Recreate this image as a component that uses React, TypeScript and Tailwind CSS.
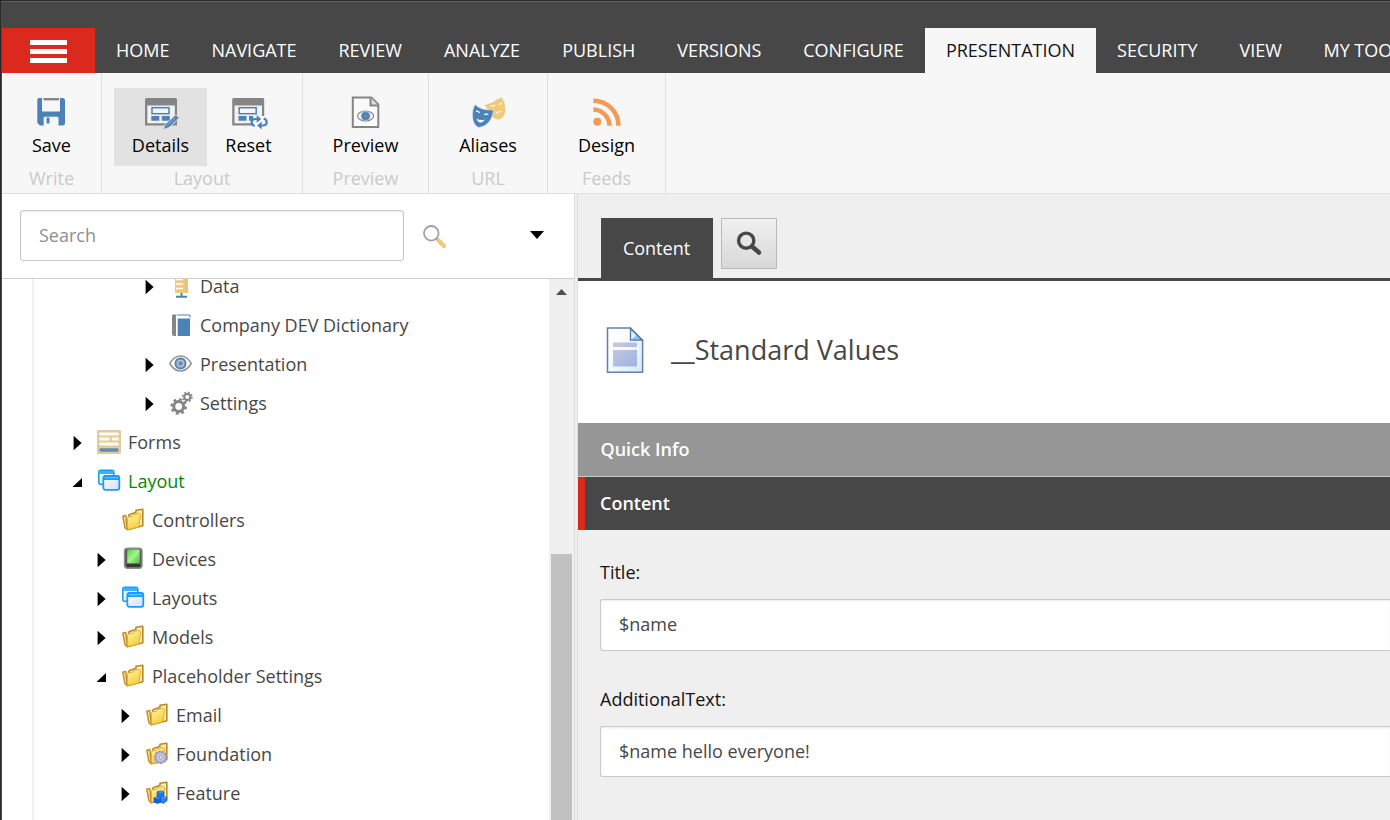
import React from "react";

const tabs: { label: string; w: string; active?: boolean }[] = [
  { label: "HOME", w: "w-[95.5px]" },
  { label: "NAVIGATE", w: "w-[127px]" },
  { label: "REVIEW", w: "w-[105.5px]" },
  { label: "ANALYZE", w: "w-[118px]" },
  { label: "PUBLISH", w: "w-[115.5px]" },
  { label: "VERSIONS", w: "w-[125.5px]" },
  { label: "CONFIGURE", w: "w-[143px]" },
  { label: "PRESENTATION", w: "w-[171px]", active: true },
  { label: "SECURITY", w: "w-[122.5px]" },
  { label: "VIEW", w: "w-[84.5px]" },
  { label: "MY TOOLS", w: "w-[129px]" },
];

const BLUE = "#4d82b8";
const GRAY = "#858585";
const SAND = "#efc97c";

function SaveIcon() {
  return (
    <svg className="size-9" viewBox="0 0 36 36">
      <path d="M5.500 4H9v12.500q0 1.500 1.500 1.500h15q1.500 0 1.500-1.500V4h2.500Q32 4 32 6.500V29q0 2.500-2.500 2.500h-4V24q0-1.300-1.300-1.300H12q-1.300 0-1.300 1.300v7.500H7L4.300 29V6.500Q4.300 4 5.500 4z" fill={BLUE} />
      <path d="M9 17.500h18v4.500H9z" fill={BLUE} />
      <path d="M10.500 4h15.500v2.400H10.500z" fill={GRAY} />
      <path d="M13.500 23.500h3v6h-3z" fill={BLUE} />
    </svg>
  );
}

function LayoutBase() {
  return (
    <g>
      <path d="M2 5.500Q2 4 3.500 4h29Q34 4 34 5.500V31.500H2z" fill={GRAY} />
      <path d="M4.300 11.500h27.500V29.300H4.300z" fill="#f2f2f2" />
      <rect x="9" y="13.700" width="17" height="6" fill="#f7f7f7" stroke={BLUE} strokeWidth="1.500" />
      <path d="M8.300 22h8v4.700h-8zM18.800 22h8v4.700h-8z" fill={BLUE} />
    </g>
  );
}

function DetailsIcon() {
  return (
    <svg className="size-9 overflow-visible" viewBox="0 0 36 36">
      <LayoutBase />
      <path d="M20.500 35.500l1.500-5L32.500 21l3.800 2.500L26 33.500z" fill={BLUE} stroke="#e2e2e2" strokeWidth=".8" />
      <path d="M24 31.500l8-7.500" stroke="#8fb3d6" strokeWidth="1" />
    </svg>
  );
}

function ResetIcon() {
  return (
    <svg className="size-9 overflow-visible" viewBox="0 0 36 36">
      <g transform="translate(-.8 0)">
        <LayoutBase />
        <path d="M23 22h13v12H23z" fill="#f7f7f7" />
        <path d="M24.500 32q-3-1-3-3.500 0-3.500 4-3.500h3M33.500 24.500q3 1 3 3.500 0 3.500-4 3.500h-3" fill="none" stroke={BLUE} strokeWidth="2.200" />
        <path d="M26.500 21l4.500 4-4.500 4zM31.500 35.500l-4.500-4 4.500-4z" fill={BLUE} />
      </g>
    </svg>
  );
}

function PreviewIcon() {
  return (
    <svg className="size-9" viewBox="0 0 36 36">
      <path d="M5.800 3.500h18.500l7 7v22.500H5.800z" fill="#fafafa" stroke={GRAY} strokeWidth="2" />
      <path d="M23.500 3.500v8h8" fill="#ddd" stroke={GRAY} strokeWidth="2" />
      <ellipse cx="18.600" cy="22" rx="8" ry="5" fill="#fff" stroke={GRAY} strokeWidth="1.200" />
      <circle cx="18.600" cy="22" r="4.500" fill={BLUE} stroke="#9bbbd9" strokeWidth="1" />
      <circle cx="18.600" cy="22" r="1.600" fill={GRAY} />
    </svg>
  );
}

function AliasesIcon() {
  return (
    <svg className="size-9 overflow-visible" viewBox="0 0 36 36">
      <path d="M14.500 11Q22 9.500 27.500 5l4.500-1.500q3.500 6 3.500 12-.5 8.500-6.500 10-3 .5-6-2z" fill={SAND} />
      <path d="M20.500 12q2.500 1 4.500-1M28.500 10q2.500.5 3.500-1.500M26 20q1.500-3.500 5.500-2" fill="none" stroke="#fff7e6" strokeWidth="1.200" />
      <path d="M5 10.500q6 6 18.500 5.500-1 9-6 13.500-3.500 3.500-9 4-6-3-6-11.500Q2 15.500 5 10.500z" fill={BLUE} stroke="#f7f7f7" strokeWidth=".5" />
      <path d="M6 17.300q2-.8 3.500 1.500M14.300 20.500q2.500-.8 4 0" fill="none" stroke="#fff" strokeWidth="1.400" />
      <path d="M6.500 24.500q4 2.500 8.500 1-2.500 3.500-5 3-2.500-.5-3.500-4z" fill="#fff" />
    </svg>
  );
}

function FeedIcon() {
  return (
    <svg className="size-9" viewBox="0 0 36 36" fill="none" stroke="#f09c56" strokeWidth="4.500">
      <circle cx="9.300" cy="27.800" r="4" fill="#f09c56" stroke="none" />
      <path d="M5.300 15.500A16.500 16.500 0 0 1 21.500 31.700M5.300 6.700A25 25 0 0 1 30.500 31.700" />
    </svg>
  );
}

function Command({ icon, label, className = "" }: { icon: React.ReactNode; label: string; className?: string }) {
  return (
    <button className={"flex h-[78px] flex-col items-center pt-[6px] text-black " + className}>
      {icon}
      <span className="mt-[3px] leading-6">{label}</span>
    </button>
  );
}

function Group({ caption, className, children }: { caption: string; className: string; children: React.ReactNode }) {
  return (
    <section className={"flex shrink-0 flex-col items-center border-r border-[#e0e0e0] pt-[15px] " + className}>
      <div className="flex">{children}</div>
      <span className="leading-6 text-[#cacaca]">{caption}</span>
    </section>
  );
}

function DataIcon() {
  return (
    <svg className="size-6" viewBox="0 0 24 24">
      <path d="M6 1h13v18H6z" fill={SAND} />
      <path d="M7 5.500h7M7 10h7M7 14.500h7" stroke="#fff" strokeWidth="1.500" />
      <path d="M17 1v18" stroke="#e5b865" strokeWidth="1" />
      <path d="M7 22.800h11M12.500 19v3" stroke={BLUE} strokeWidth="2" />
    </svg>
  );
}
function BookIcon() {
  return (
    <svg className="size-6" viewBox="0 0 24 24">
      <path d="M4 1.500h4L6.500 4H7v19H5q-2 0-2-2V3q0-1.500 1-1.500z" fill={GRAY} />
      <path d="M8.700 5.500H21V22q0 1-1 1H8.700z" fill={BLUE} />
      <path d="M8.500 2H21v2.500" fill="none" stroke={BLUE} />
    </svg>
  );
}
function EyeIcon() {
  return (
    <svg className="size-6" viewBox="0 0 24 24">
      <path d="M.8 11.500Q5 4 11.500 4t10.700 7.500Q18 19 11.500 19T.8 11.500z" fill="#fff" stroke="#999" strokeWidth="1.700" />
      <circle cx="11.500" cy="11.500" r="5" fill="#a8c5e0" stroke={BLUE} strokeWidth="2" />
      <circle cx="11.500" cy="11.500" r="2.300" fill={GRAY} />
    </svg>
  );
}
function GearsIcon() {
  return (
    <svg className="size-6" viewBox="0 0 24 24" fill="none" stroke={GRAY}>
      <circle cx="9.700" cy="15.500" r="4.900" strokeWidth="3" />
      <circle cx="9.700" cy="15.500" r="7" strokeWidth="2.600" strokeDasharray="2.750 2.750" />
      <circle cx="18.300" cy="6" r="3" strokeWidth="2" />
      <circle cx="18.300" cy="6" r="4.600" strokeWidth="1.700" strokeDasharray="1.800 1.810" />
    </svg>
  );
}
function FormsIcon() {
  return (
    <svg className="size-6" viewBox="0 0 24 24">
      <rect width="24" height="24" rx="1" fill="#dfcb9d" />
      <path d="M3.500 4h17M3.500 9h8M16 9h4.500M3.500 14h17" stroke="#fffdf3" strokeWidth="2.900" strokeLinecap="round" />
      <path d="M4 20h16" stroke="#6489b3" strokeWidth="3.500" strokeLinecap="round" />
    </svg>
  );
}
function WindowsIcon() {
  return (
    <svg className="size-6" viewBox="0 0 24 24">
      <defs>
        <linearGradient id="pane" x2="1" y2="1"><stop stopColor="#fff" /><stop offset="1" stopColor="#d9dcf5" /></linearGradient>
      </defs>
      <rect x="1.800" y="1.300" width="15" height="14" rx="2" fill="#eef4ff" stroke="#1c9cf6" strokeWidth="1.600" />
      <path d="M2.500 5V3l1-1h11.500l1 1V5z" fill="#36b2ff" />
      <rect x="6.300" y="6.800" width="16" height="14" rx="2" fill="url(#pane)" stroke="#1c9cf6" strokeWidth="1.800" />
      <path d="M6 11V8.500q0-2 2-2h12.500q2 0 2 2V11z" fill="#1c9cf6" />
      <path d="M8 8.700h13" stroke="#66c9ff" strokeWidth="1.200" />
    </svg>
  );
}
function FolderIcon({ badge }: { badge?: "gear" | "cubes" }) {
  return (
    <svg className="size-6" viewBox="0 0 24 24">
      <defs>
        <linearGradient id="fold" x2=".6" y2="1"><stop stopColor="#fff6a8" /><stop offset="1" stopColor="#f6cd38" /></linearGradient>
      </defs>
      <g transform="translate(0 -.2)">
        <path d="M8 7l7-2.500V2.500l6.800-1V18L6.500 22z" fill="#fbf0c4" stroke="#bd871e" strokeWidth="1.600" strokeLinejoin="round" />
        <path d="M1.800 8.500l3-.8 1.500 14.100L4 20z" fill="#f9e28b" stroke="#c28c28" strokeWidth="1.400" strokeLinejoin="round" />
        <path d="M6.300 10.500q0-1 1-1.300l4.200-.8 1-1.600 6-1.300 1.200 1.500L18 17.500q-.3 1.500-1.500 2l-9.700 2.300z" fill="url(#fold)" stroke="#dfaf33" strokeWidth="1" strokeLinejoin="round" />
        {badge === "gear" && (
          <g>
            <circle cx="15.500" cy="15.500" r="6" fill="#aaaacc" stroke="#9494b8" strokeWidth="1.600" strokeDasharray="2.300 1.300" />
            <circle cx="15.500" cy="15.500" r="4" fill="#c6c6e2" />
            <circle cx="15.500" cy="15.500" r="1.600" fill="#eeeefa" stroke="#9c9cba" />
          </g>
        )}
        {badge === "cubes" && (
          <g stroke="#0b50bd" strokeWidth=".6">
            <path d="M12 11l3.500-1 3.500 1v4.500l-3.500 1.500-3.500-1.500z" fill="#1f75ef" />
            <path d="M9 17l3.500-1 3.500 1v4.500l-3.500 1.200L9 21.500z" fill="#1263dc" />
            <path d="M15.500 16.500l3-1 3.500 1V20l-3.500 2.700-3-1.500z" fill="#2381f5" />
            <path d="M9.500 17.200l3 .8 3-.8-3-.7zM12.500 11.200l3 .8 3-.8-3-.7zM16 16.700l3 .8 3-.8-3-.7z" fill="#5ba2f5" stroke="none" />
          </g>
        )}
      </g>
    </svg>
  );
}
function DeviceIcon() {
  return (
    <svg className="size-6" viewBox="0 0 24 24">
      <defs>
        <linearGradient id="scr" x2="1" y2="1"><stop stopColor="#55d447" /><stop offset=".5" stopColor="#a5f38c" /><stop offset="1" stopColor="#43c635" /></linearGradient>
      </defs>
      <rect x="3.500" y="1.300" width="17.500" height="20" rx="3" fill="#5a5a5a" stroke="#8d8d8d" strokeWidth="1.400" />
      <rect x="6.200" y="2.500" width="12.500" height="13.700" rx=".5" fill="url(#scr)" />
      <path d="M6 18.500h13" stroke="#2b2b2b" strokeWidth="2.700" strokeDasharray="3 .5" />
    </svg>
  );
}

type Row = { label: string; pad: string; state?: "open" | "closed"; icon: React.ReactNode; color?: string };
const rows: Row[] = [
  { label: "Data", pad: "pl-[143px]", state: "closed", icon: <DataIcon /> },
  { label: "Company DEV Dictionary", pad: "pl-[143px]", icon: <BookIcon /> },
  { label: "Presentation", pad: "pl-[143px]", state: "closed", icon: <EyeIcon /> },
  { label: "Settings", pad: "pl-[143px]", state: "closed", icon: <GearsIcon /> },
  { label: "Forms", pad: "pl-[71px]", state: "closed", icon: <FormsIcon /> },
  { label: "Layout", pad: "pl-[71px]", state: "open", icon: <WindowsIcon />, color: "text-[#008a00]" },
  { label: "Controllers", pad: "pl-[95px]", icon: <FolderIcon /> },
  { label: "Devices", pad: "pl-[95px]", state: "closed", icon: <DeviceIcon /> },
  { label: "Layouts", pad: "pl-[95px]", state: "closed", icon: <WindowsIcon /> },
  { label: "Models", pad: "pl-[95px]", state: "closed", icon: <FolderIcon /> },
  { label: "Placeholder Settings", pad: "pl-[95px]", state: "open", icon: <FolderIcon /> },
  { label: "Email", pad: "pl-[119px]", state: "closed", icon: <FolderIcon /> },
  { label: "Foundation", pad: "pl-[119px]", state: "closed", icon: <FolderIcon badge="gear" /> },
  { label: "Feature", pad: "pl-[119px]", state: "closed", icon: <FolderIcon badge="cubes" /> },
];

function Tree() {
  return (
    <div className="flex min-w-0 flex-1 overflow-hidden">
      <div className="ml-[30px] w-[2px] shrink-0 bg-[#f2f2f2]" />
      <ul className="-mt-[12px] -ml-8 flex-1">
        {rows.map((r) => (
          <li key={r.label} className={"flex h-[39px] items-center " + r.pad}>
            <svg className="size-6 shrink-0" viewBox="0 0 24 24">
              {r.state === "closed" && <path d="M.6 4.800l8 7.200-8 7.200z" />}
              {r.state === "open" && <path d="M9 8v9H-.5z" />}
            </svg>
            <span className="mb-px shrink-0">{r.icon}</span>
            <span className={"ml-[7px] whitespace-nowrap " + (r.color ?? "text-[#474747]")}>{r.label}</span>
          </li>
        ))}
      </ul>
    </div>
  );
}

function Field({ label, value, className, height }: { label: string; value: string; className: string; height: string }) {
  return (
    <label className={"block " + className}>
      <span className="block leading-6 text-[#131313]">{label}</span>
      <span className={"mt-[15px] flex items-start rounded-l-[3px] border border-r-0 border-[#c9c9c9] bg-white pt-[12px] pl-[18px] leading-6 text-[#474747] shadow-[inset_0_1px_2px_rgba(0,0,0,0.08)] " + height}>
        {value}
      </span>
    </label>
  );
}

export default function App() {
  return (
    <div className="flex h-[820px] w-[1390px] flex-col overflow-hidden border-t border-l border-[#29292b] bg-white font-['Open_Sans',sans-serif] text-[18px]">
      <div className="flex min-h-0 flex-1 flex-col border-l border-[#4a4a4c]">
        <header className="flex h-[72px] shrink-0 items-end border-t border-[#626262] bg-[#474747]">
          <button className="flex h-[45px] w-[93px] shrink-0 flex-col items-center justify-center gap-[4px] bg-[#dc291e] pt-px">
            <span className="h-[5px] w-[37px] bg-white" />
            <span className="h-[5px] w-[37px] bg-white" />
            <span className="h-[5px] w-[37px] bg-white" />
          </button>
          <nav className="flex">
            {tabs.map((t) => (
              <span
                key={t.label}
                className={
                  "flex h-[45px] shrink-0 items-center justify-center whitespace-nowrap " +
                  t.w +
                  (t.active ? " bg-[#f7f7f7] text-[#131313]" : " text-white")
                }
              >
                {t.label}
              </span>
            ))}
          </nav>
        </header>

        <div className="flex h-[121px] shrink-0 border-b border-[#e0e0e0] bg-[#f7f7f7]">
          <Group caption="Write" className="w-[100px]">
            <Command icon={<SaveIcon />} label="Save" />
          </Group>
          <Group caption="Layout" className="w-[201px]">
            <Command icon={<DetailsIcon />} label="Details" className="w-[93px] bg-[#e2e2e2]" />
            <Command icon={<ResetIcon />} label="Reset" className="w-[83px]" />
          </Group>
          <Group caption="Preview" className="w-[126px]">
            <Command icon={<PreviewIcon />} label="Preview" />
          </Group>
          <Group caption="URL" className="w-[119px]">
            <Command icon={<AliasesIcon />} label="Aliases" />
          </Group>
          <Group caption="Feeds" className="w-[118px]">
            <Command icon={<FeedIcon />} label="Design" />
          </Group>
        </div>

        <div className="flex min-h-0 flex-1">
          <aside className="flex w-[572px] shrink-0 flex-col">
            <div className="flex h-[85px] shrink-0 items-start border-b border-[#cfcfcf] pt-4 pl-[18px]">
              <div className="flex h-[51px] w-[384px] items-center rounded-[3px] border border-[#c9c9c9] pl-[18px] text-[#8f8f8f] shadow-[inset_0_1px_2px_rgba(0,0,0,0.08)]">
                Search
              </div>
              <svg className="mt-[14px] ml-[18px] size-6" viewBox="0 0 24 24">
                <circle cx="9.300" cy="9.300" r="7.300" fill="none" stroke="#a0a0a0" strokeWidth="1.800" />
                <path d="M14.300 14.300l2 2" stroke="#858585" strokeWidth="2.200" />
                <path d="M16.500 16.500l5.500 5.500" stroke={SAND} strokeWidth="4.500" strokeLinecap="round" />
              </svg>
              <svg className="mt-[21px] ml-[84px] h-2 w-[14px]" viewBox="0 0 14 8">
                <path d="M0 0h14L7 8z" />
              </svg>
            </div>
            <div className="flex min-h-0 flex-1">
              <Tree />
              <div className="flex w-[25px] shrink-0 flex-col items-center bg-[#f0f0f0] pt-[10px]">
                <svg className="h-[6px] w-[11px]" viewBox="0 0 11 6"><path d="M5.500 0L11 6H0z" fill="#505050" /></svg>
                <div className="mt-[259px] w-[21px] flex-1 bg-[#c1c1c1]" />
              </div>
            </div>
          </aside>
          <div className="w-1 shrink-0 border-x border-[#dcdcdc] bg-[#f0f0f0]" />

          <main className="flex min-w-0 flex-1 flex-col bg-[#efefef]">
            <div className="flex h-[87px] shrink-0 items-start border-b-[3px] border-[#474747] pt-6 pl-[23px]">
              <span className="flex h-[60px] w-[112px] items-center justify-center bg-[#474747] pr-px text-white">Content</span>
              <button className="ml-2 flex h-[51px] w-14 items-center justify-center border border-[#b9b9b9] bg-linear-to-b from-[#f0f0f0] to-[#d8d8d8]">
                <svg className="size-6 overflow-visible" viewBox="0 0 24 24" fill="none" stroke="#474747">
                  <circle cx="9.200" cy="8.700" r="7.600" strokeWidth="3.400" />
                  <path d="M15 14.500l7 6" strokeWidth="4.500" strokeLinecap="round" />
                </svg>
              </button>
            </div>
            <div className="flex h-[142px] shrink-0 items-start bg-white pt-[45px] pl-[23px]">
              <svg className="size-12" viewBox="0 0 48 48">
                <defs>
                  <linearGradient id="paper" x2="1" y2="1"><stop stopColor="#fff" /><stop offset=".5" stopColor="#f7fafd" /><stop offset="1" stopColor="#d1e9f8" /></linearGradient>
                  <linearGradient id="ink" x2="1" y2="1"><stop stopColor="#c9c9e0" /><stop offset="1" stopColor="#9eb3df" /></linearGradient>
                </defs>
                <path d="M6.500 2h23L41.600 14.500v31.700H6.500z" fill="url(#paper)" stroke="#6580b0" strokeWidth="1.500" />
                <path d="M29.500 2.500v11.700h11.800z" fill="#8ac5eb" stroke="#5877a9" strokeWidth="1.300" />
                <path d="M30.300 13.500V4.500l5 5z" fill="#dff3ff" />
                <path d="M12 16.500h24v4.500H12zM12 24h24v16.500H12z" fill="url(#ink)" />
              </svg>
              <h1 className="mt-[6px] ml-[22px] text-[27px] leading-9 font-normal text-[#474747]">__Standard Values</h1>
            </div>
            <h2 className="flex h-[54px] shrink-0 items-center border-b border-[#c8c8c8] bg-[#969696] pl-[22.5px] text-[18px] font-semibold text-white">Quick Info</h2>
            <h2 className="flex h-[53px] shrink-0 items-center border-l-[7px] border-[#dc291e] bg-[#474747] pl-[15px] text-[18px] font-semibold text-white">Content</h2>
            <Field label="Title:" value="$name" className="mt-[30px] ml-[22px]" height="h-[52px]" />
            <Field label="AdditionalText:" value="$name hello everyone!" className="mt-[36px] ml-[22px]" height="h-[51px]" />
          </main>
        </div>
      </div>
    </div>
  );
}
